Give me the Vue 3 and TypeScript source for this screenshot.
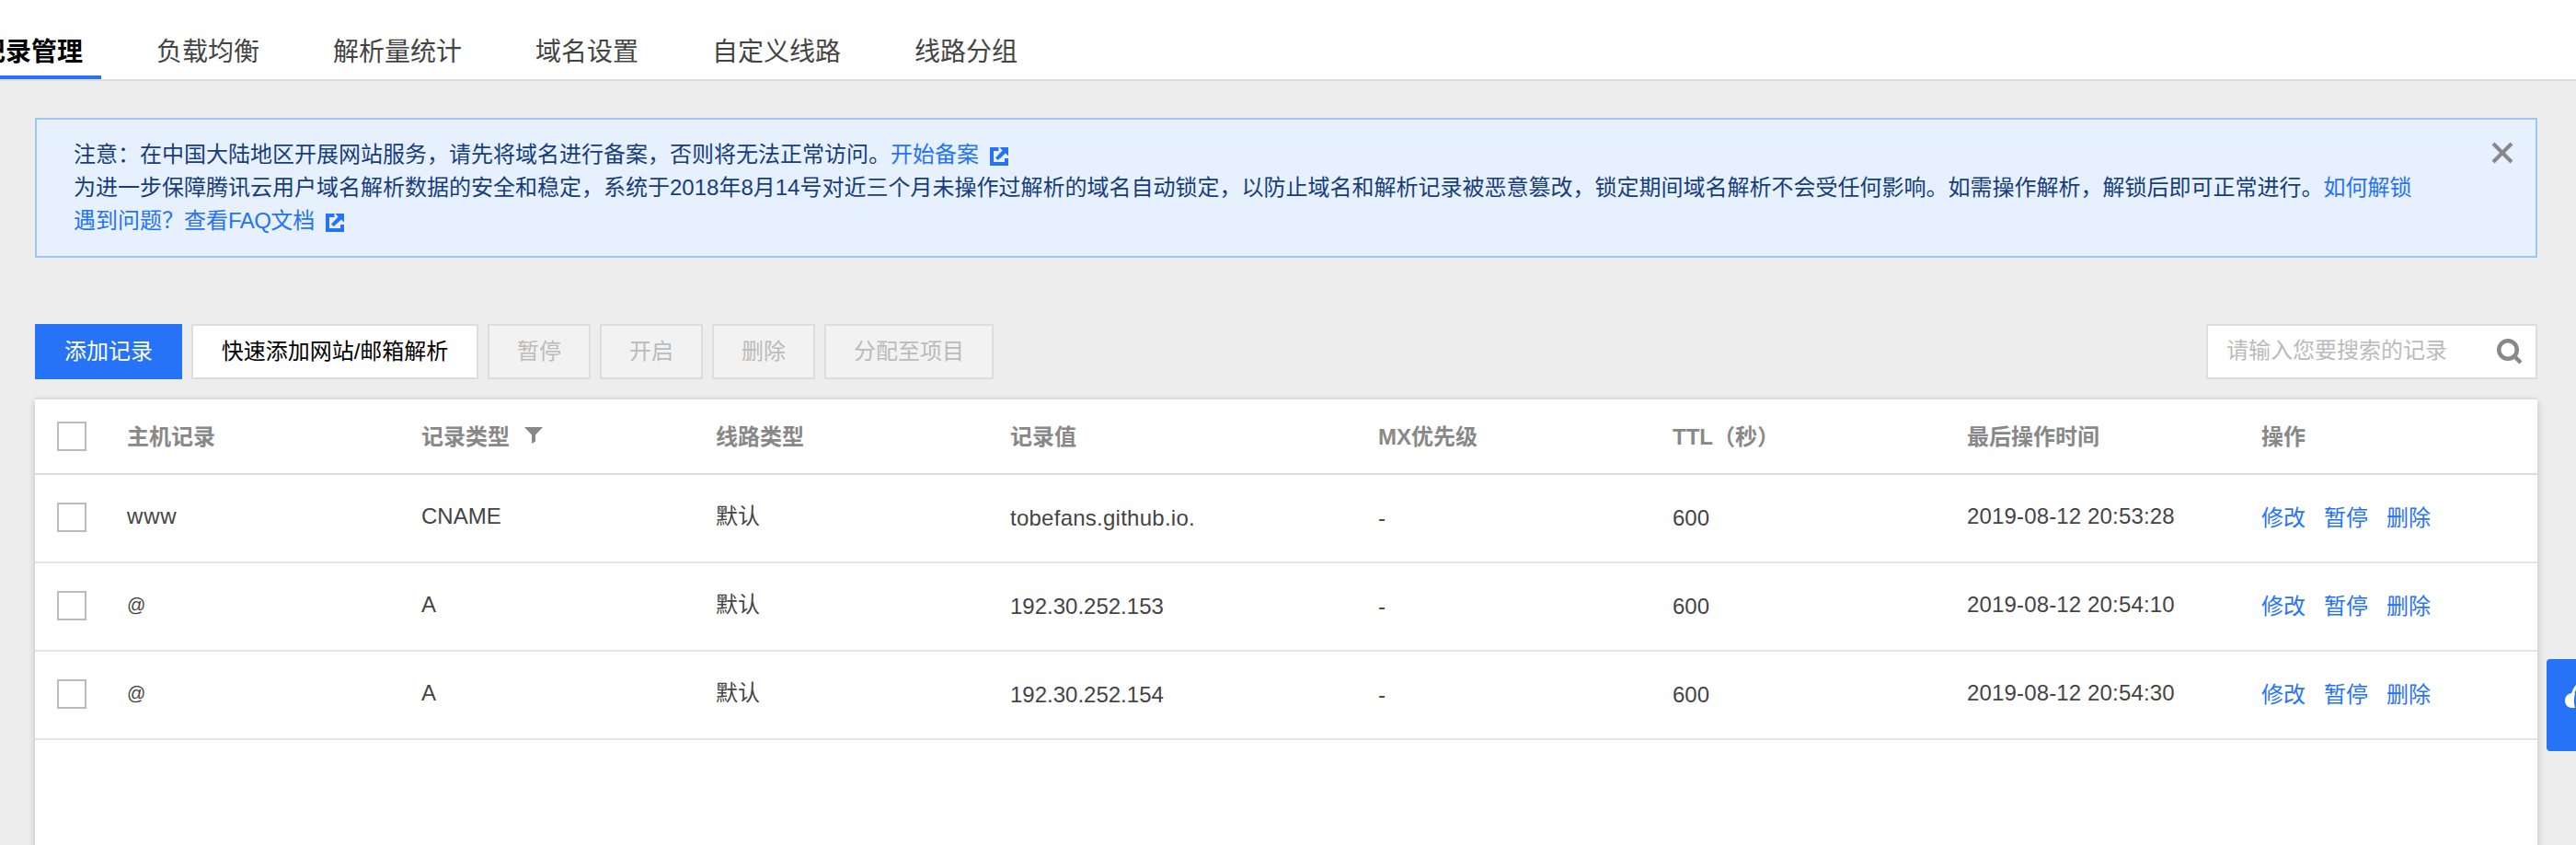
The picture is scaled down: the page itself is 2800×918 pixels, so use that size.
<script setup lang="ts">
interface DnsRecord {
  host: string
  type: string
  line: string
  value: string
  mx: string
  ttl: number
  updated: string
}

interface ToolButton {
  label: string
  kind: 'primary' | 'normal' | 'disabled'
}

const tabs: string[] = ['记录管理', '负载均衡', '解析量统计', '域名设置', '自定义线路', '线路分组']

const buttons: ToolButton[] = [
  { label: '添加记录', kind: 'primary' },
  { label: '快速添加网站/邮箱解析', kind: 'normal' },
  { label: '暂停', kind: 'disabled' },
  { label: '开启', kind: 'disabled' },
  { label: '删除', kind: 'disabled' },
  { label: '分配至项目', kind: 'disabled' },
]

const columns: string[] = ['主机记录', '记录类型', '线路类型', '记录值', 'MX优先级', 'TTL（秒）', '最后操作时间', '操作']
const actions: string[] = ['修改', '暂停', '删除']

const records: DnsRecord[] = [
  { host: 'www', type: 'CNAME', line: '默认', value: 'tobefans.github.io.', mx: '-', ttl: 600, updated: '2019-08-12 20:53:28' },
  { host: '@', type: 'A', line: '默认', value: '192.30.252.153', mx: '-', ttl: 600, updated: '2019-08-12 20:54:10' },
  { host: '@', type: 'A', line: '默认', value: '192.30.252.154', mx: '-', ttl: 600, updated: '2019-08-12 20:54:30' },
]
</script>

<template>
  <div class="page">
    <nav class="tabs">
      <a v-for="(tab, i) in tabs" :key="tab" class="tab" :class="{ active: i === 0 }">{{ tab }}</a>
    </nav>

    <main class="content">
      <section class="notice">
        <div class="notice-text">
          <p>
            <span>注意：在中国大陆地区开展网站服务，请先将域名进行备案，否则将无法正常访问。</span><a class="link">开始备案</a>
            <svg class="external" viewBox="0 0 20 20">
              <path d="M0 0H9.5V4H4V16H16V12H20V20H0Z" />
              <path d="M10.500 0H20V9.500L17 6.600L8.800 14L6 11.400L13.600 3.400Z" />
            </svg>
          </p>
          <p>
            <span>为进一步保障腾讯云用户域名解析数据的安全和稳定，系统于2018年8月14号对近三个月未操作过解析的域名自动锁定，以防止域名和解析记录被恶意篡改，锁定期间域名解析不会受任何影响。如需操作解析，解锁后即可正常进行。</span><a class="link">如何解锁</a>
          </p>
          <p>
            <a class="link">遇到问题？查看<span class="latin">FAQ</span>文档</a>
            <svg class="external" viewBox="0 0 20 20">
              <path d="M0 0H9.5V4H4V16H16V12H20V20H0Z" />
              <path d="M10.500 0H20V9.500L17 6.600L8.800 14L6 11.400L13.600 3.400Z" />
            </svg>
          </p>
        </div>
        <svg class="close" viewBox="0 0 24 24">
          <path d="M2 2L22 22M22 2L2 22" />
        </svg>
      </section>

      <div class="toolbar">
        <button v-for="b in buttons" :key="b.label" class="btn" :class="b.kind" :disabled="b.kind === 'disabled'">{{ b.label }}</button>
        <div class="search">
          <span>请输入您要搜索的记录</span>
          <svg viewBox="0 0 28 28">
            <circle cx="12" cy="12" r="9.8" />
            <path d="M19 19L26 26" />
          </svg>
        </div>
      </div>

      <section class="panel">
        <div class="row head">
          <div class="check-cell"><i class="check"></i></div>
          <div v-for="(c, i) in columns" :key="c" class="cell">
            <span>{{ c }}</span>
            <svg v-if="i === 1" class="filter" viewBox="0 0 20 18">
              <path d="M0 0H20L12 8.6V15.6L8 18V8.6Z" />
            </svg>
          </div>
        </div>
        <div v-for="r in records" :key="r.value" class="row">
          <div class="check-cell"><i class="check"></i></div>
          <div class="cell raised host">
            <span :class="{ apex: r.host === '@' }">{{ r.host }}</span>
          </div>
          <div class="cell raised">{{ r.type }}</div>
          <div class="cell raised">{{ r.line }}</div>
          <div class="cell" :class="{ domain: r.type === 'CNAME' }">{{ r.value }}</div>
          <div class="cell">{{ r.mx }}</div>
          <div class="cell">{{ r.ttl }}</div>
          <div class="cell raised time">{{ r.updated }}</div>
          <div class="cell ops"><a v-for="a in actions" :key="a" class="link">{{ a }}</a></div>
        </div>
      </section>
    </main>

    <aside class="service">
      <svg viewBox="0 0 32 100">
        <path d="M27 37C22 38 20 41.500 20 45C20 50 23.500 53 28 53H31C29.500 48 29.500 42 31 37Z" />
        <path class="arc" d="M28.500 39C29 35 31 31 34 28" />
      </svg>
    </aside>
  </div>
</template>

<style>
body {
  background: #ededed;
  overflow: hidden;
}
</style>

<style scoped>
.page {
  width: 2800px;
  height: 918px;
  overflow: hidden;
  position: relative;
  background: #ededed;
  color: #444;
  font: 24px/36px "Liberation Sans", "Noto Sans CJK SC", sans-serif;
  box-sizing: border-box;
}

.page * {
  box-sizing: border-box;
}

.tabs {
  display: flex;
  gap: 40px;
  height: 88px;
  padding-top: 26px;
  margin-left: -42px;
  background: #fff;
  border-bottom: 2px solid #ddd;
}

.tab {
  flex: none;
  height: 60px;
  padding: 2px 20px 0;
  font-size: 28px;
  line-height: 58px;
  border-bottom: 4px solid transparent;
}

.tab.active {
  color: #000;
  font-weight: 700;
  border-color: #2673f8;
}

.content {
  padding: 40px 42px 0 38px;
}

.notice {
  display: flex;
  justify-content: space-between;
  height: 152px;
  padding: 20px 24px 0 40px;
  background: #e6f0ff;
  border: 2px solid #9dc6fb;
  color: #163e7c;
}

.notice-text p {
  display: flex;
  align-items: center;
  height: 36px;
  margin: 0;
  white-space: nowrap;
}

.link {
  color: #2673f8;
}

.latin {
  letter-spacing: -0.6px;
}

.external {
  width: 20px;
  height: 20px;
  margin: 4px 0 0 12px;
  fill: #2673f8;
}

.close {
  width: 24px;
  height: 24px;
  margin-top: 4px;
  stroke: #888;
  stroke-width: 4;
}

.toolbar {
  display: flex;
  gap: 10px;
  margin-top: 72px;
  height: 60px;
}

.btn {
  height: 60px;
  padding: 0 30px;
  border: 2px solid #ddd;
  font: inherit;
  line-height: 54px;
  white-space: nowrap;
  background: #fff;
  color: #000;
}

.btn.primary {
  background: #2673f8;
  border-color: #2673f8;
  color: #fff;
}

.btn.normal {
  width: 312px;
}

.btn.disabled {
  background: #f2f2f2;
  color: #bbb;
}

.search {
  display: flex;
  justify-content: space-between;
  width: 360px;
  margin-left: auto;
  padding: 0 14px 0 20px;
  border: 2px solid #ddd;
  background: #fff;
  color: #bbb;
  line-height: 54px;
}

.search svg {
  width: 28px;
  height: 28px;
  margin-top: 14px;
  fill: none;
  stroke: #888;
  stroke-width: 4.5;
}

.panel {
  height: 520px;
  margin-top: 20px;
  background: #fff;
  border-top: 2px solid #ddd;
  box-shadow: 0 4px 8px rgba(0, 0, 0, 0.2);
}

.row {
  display: grid;
  grid-template-columns: 100px 320px 320px 320px 400px 320px 320px 320px 300px;
  height: 96px;
  border-bottom: 2px solid #e5e5e5;
}

.row.head {
  height: 82px;
  border-color: #ddd;
  color: #888;
  font-weight: 700;
}

.check-cell {
  padding: 30px 0 0 24px;
}

.head .check-cell {
  padding-top: 24px;
}

.check {
  display: block;
  width: 32px;
  height: 32px;
  border: 2px solid #bbb;
}

.cell {
  display: flex;
  padding-top: 29px;
}

.head .cell {
  padding-top: 23px;
}

.cell.raised {
  padding-top: 27px;
}

.cell.time {
  letter-spacing: 0.15px;
}

.cell.domain {
  letter-spacing: 0.25px;
}

.cell.host {
  letter-spacing: 0.8px;
}

.apex {
  font-size: 20px;
}

.ops {
  gap: 20px;
}

.filter {
  width: 20px;
  height: 18px;
  margin: 7px 0 0 16px;
  fill: #888;
}

.service {
  position: absolute;
  top: 716px;
  right: 0;
  width: 32px;
  height: 100px;
  border-radius: 4px 0 0 4px;
  background: #2673f8;
}

.service svg {
  display: block;
  width: 32px;
  height: 100px;
  fill: #fff;
}

.service .arc {
  fill: none;
  stroke: #fff;
  stroke-width: 3;
}
</style>
